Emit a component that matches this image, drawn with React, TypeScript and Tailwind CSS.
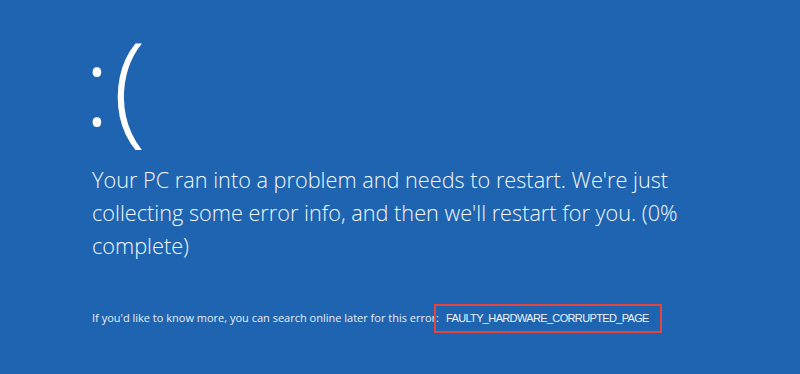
import React from "react";

export default function App() {
  return (
    <div className="w-[800px] h-[374px] bg-[#1f64b0] text-white overflow-hidden" style={{ fontFamily: '"Open Sans", "Noto Sans", sans-serif' }}>
      <div className="pl-[84px]">
        <div className="h-[163px] flex items-start font-light">
          <span className="mt-[31px] text-[108px] leading-none">:</span>
          <span className="mt-[23px] ml-[3px] text-[122px] leading-none">(</span>
        </div>
        <p className="pl-[8px] w-[610px] text-[21.7px] leading-[33px] font-light text-[#f4f8fc]">
          Your PC ran into a problem and needs to restart. We're just collecting some error info, and then we'll restart for you. (0% complete)
        </p>
        <div className="mt-[42px] pl-[8px] flex items-center text-[11px] text-[#e8eef7]">
          <span>If you'd like to know more, you can search online later for this error:</span>
          <span className="ml-[-5px] border-2 border-[#e2463f] h-[29px] w-[228px] flex items-center pl-[10px] text-[11px] tracking-[-0.65px] text-[#eef3fa]" style={{ fontFamily: '"Liberation Sans", Arial, sans-serif' }}>
            FAULTY_HARDWARE_CORRUPTED_PAGE
          </span>
        </div>
      </div>
    </div>
  );
}
